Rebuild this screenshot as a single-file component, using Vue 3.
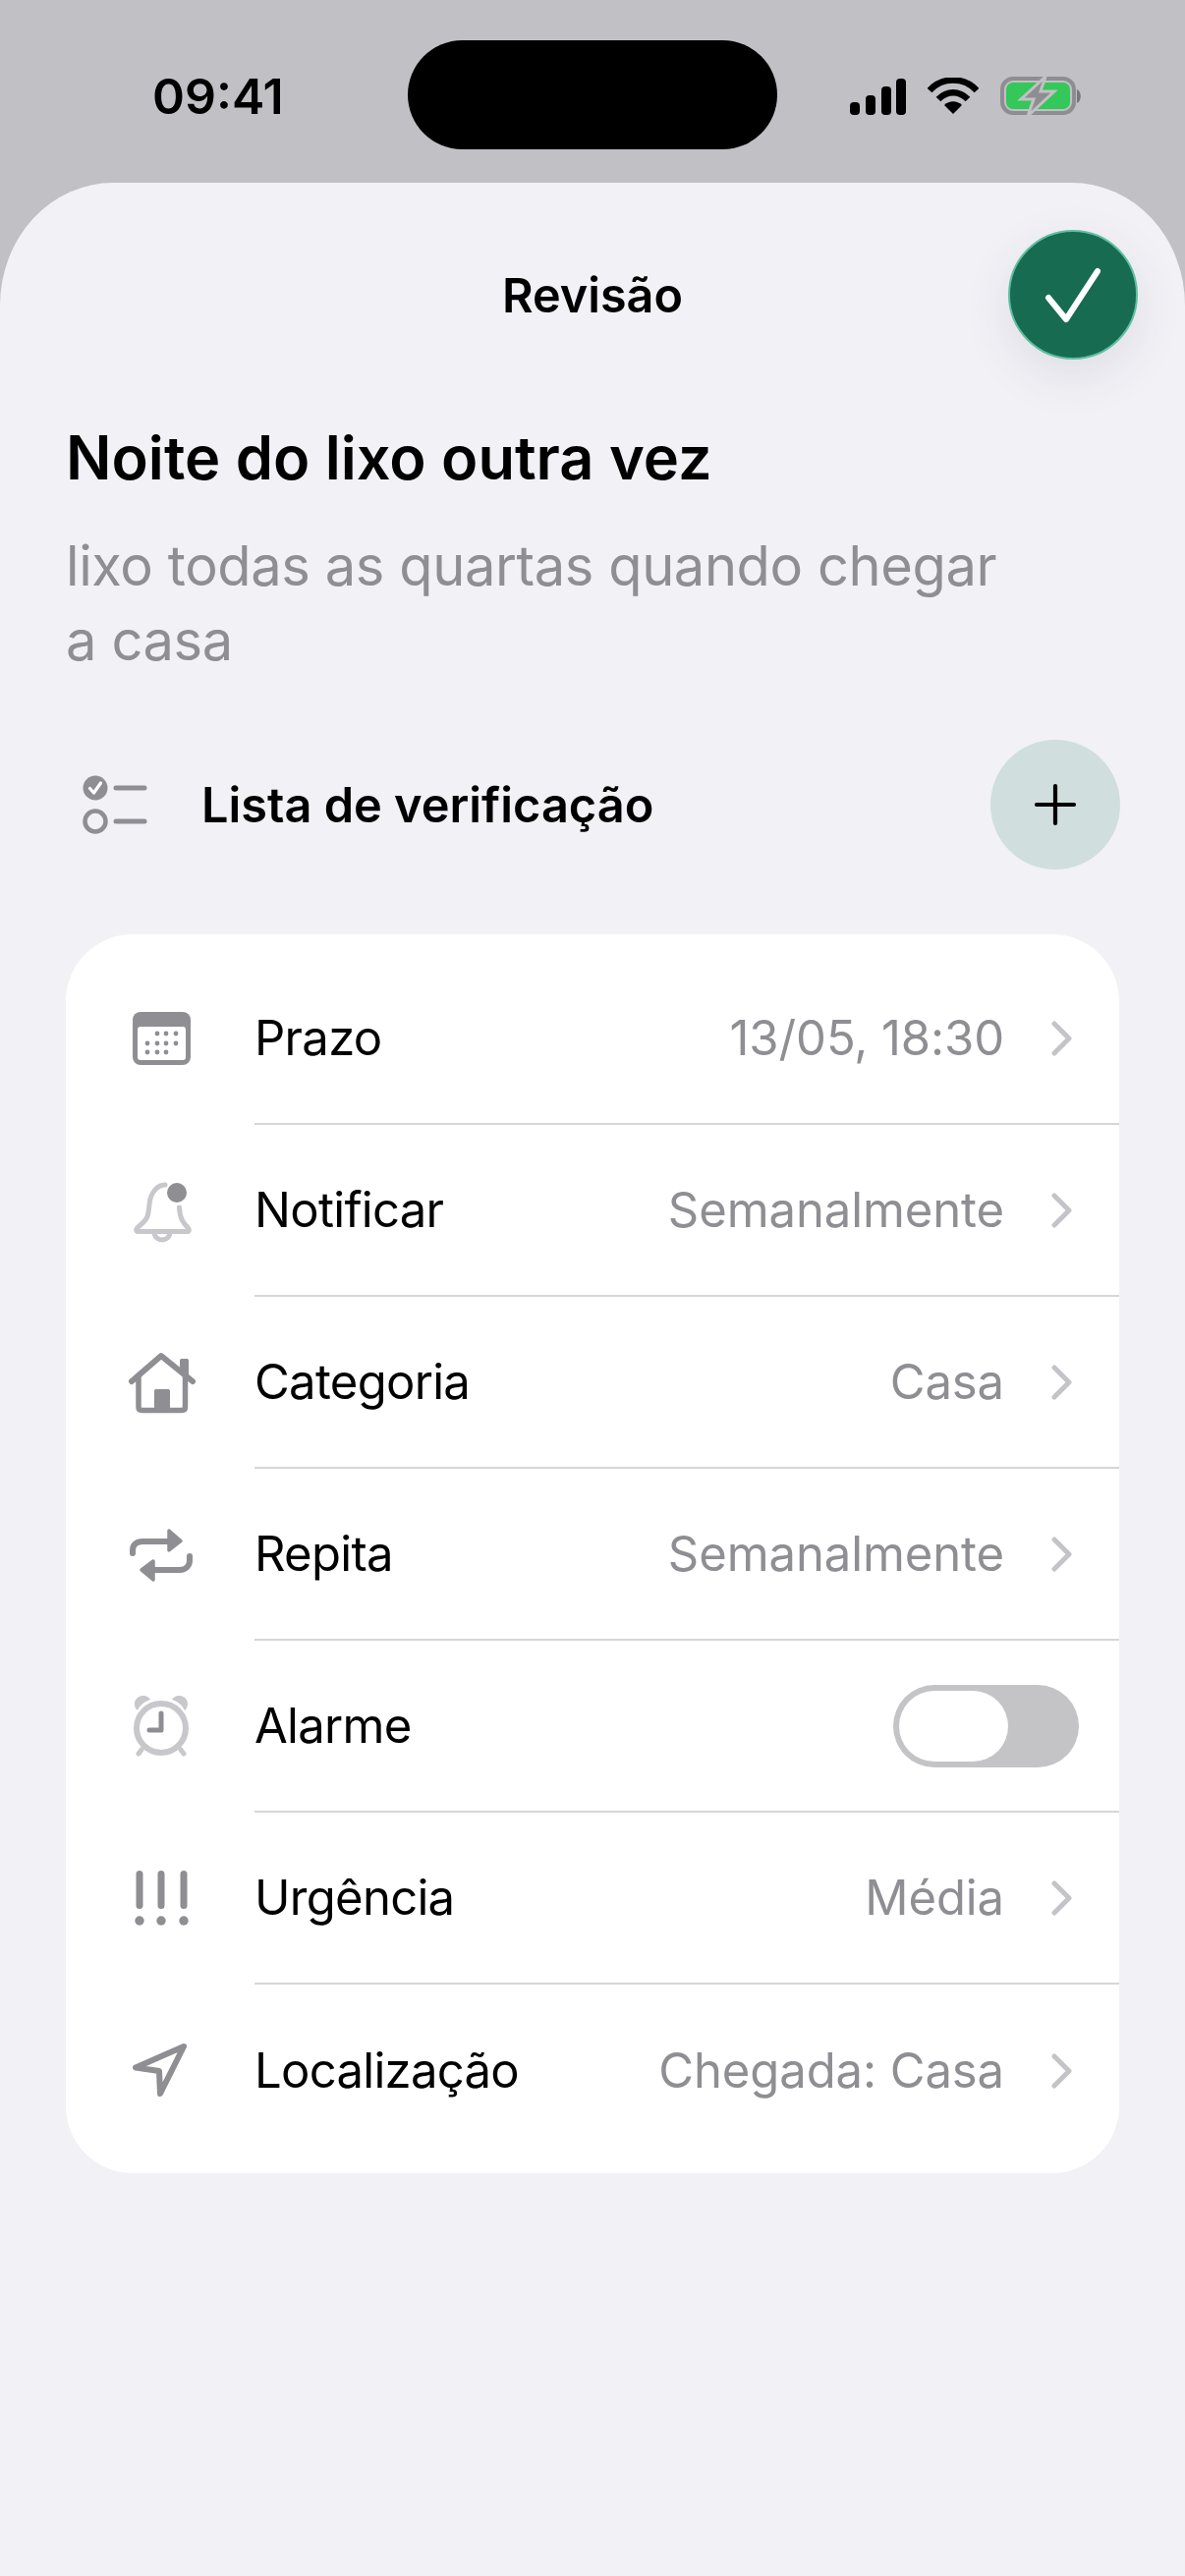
<template>
  <div class="page">
    <!-- status bar -->
    <div class="status">
      <span class="time">09:41</span>
      <div class="island"></div>
      <div class="status-icons">
        <svg width="60" height="38" viewBox="0 0 60 38">
          <rect x="2" y="25" width="10" height="13" rx="4" />
          <rect x="18" y="18" width="10" height="20" rx="4" />
          <rect x="34" y="9" width="10" height="29" rx="4" />
          <rect x="49" y="1" width="10" height="37" rx="4" />
        </svg>
        <svg width="52" height="38" viewBox="0 0 52 38">
          <path d="M2 13 C15 -1 37 -1 50 13" fill="none" stroke="#000" stroke-width="6.500" />
          <path d="M11 22 C20 13 32 13 41 22" fill="none" stroke="#000" stroke-width="6.500" />
          <path d="M17 28 C22 23 30 23 35 28 L26 37 Z" />
        </svg>
        <svg width="84" height="42" viewBox="0 0 84 42">
          <rect x="3" y="3" width="73" height="35" rx="11" fill="none" stroke="#8e8e92" stroke-width="4" />
          <rect x="7" y="7" width="65" height="27" rx="7" fill="#34c759" />
          <path d="M79 14 C84 16 84 26 79 28 Z" fill="#77777b" />
          <path d="M47 1 L22 24 H35 L29 41 L56 16 H42 Z" fill="#8e8e92" stroke="#c1c0c5" stroke-width="3" />
        </svg>
      </div>
    </div>

    <!-- sheet -->
    <div class="sheet">
      <div class="header">
        <span class="header-title">Revisão</span>
        <button class="done">
          <svg width="60" height="60" viewBox="0 0 60 60">
            <path d="M5 33 L23 55 L55 6" fill="none" stroke="#fff" stroke-width="6" stroke-linecap="round" stroke-linejoin="round" />
          </svg>
        </button>
      </div>

      <h1 class="title">Noite do lixo outra vez</h1>
      <p class="note">lixo todas as quartas quando chegar a casa</p>

      <div class="checklist">
        <div class="checklist-left">
          <svg width="68" height="60" viewBox="0 0 68 60">
            <circle cx="15" cy="13" r="12.500" fill="#8e8e93" />
            <path d="M9.500 13.500 L13.500 18 L20.500 8" fill="none" stroke="#fff" stroke-width="3.200" stroke-linecap="round" stroke-linejoin="round" />
            <circle cx="15" cy="47" r="10.500" fill="none" stroke="#8e8e93" stroke-width="4.500" />
            <path d="M36 13 H65 M36 47 H65" stroke="#8e8e93" stroke-width="5" stroke-linecap="round" />
          </svg>
          <span class="checklist-label">Lista de verificação</span>
        </div>
        <button class="add">
          <svg width="44" height="44" viewBox="0 0 44 44">
            <path d="M22 3 V41 M3 22 H41" stroke="#000" stroke-width="4.200" stroke-linecap="round" />
          </svg>
        </button>
      </div>

      <div class="card">
        <div v-for="row in rows" :key="row.label" class="row">
          <div class="row-icon">
            <svg width="80" height="80" viewBox="0 0 80 80">
              <g v-if="row.icon === 'calendar'">
                <rect x="11" y="12" width="59" height="54" rx="8" fill="#8e8e93" />
                <rect x="16" y="27" width="49" height="34" rx="3" fill="#fff" />
                <circle v-for="d in calendarDots" :key="d[0] + '-' + d[1]" :cx="d[0]" :cy="d[1]" r="2.400" fill="#8e8e93" />
              </g>
              <g v-else-if="row.icon === 'bell'">
                <path d="M44 13 C36 13 29 21 28 33 C27 44 26 48 21 52 L15.500 57 C14 59 14.500 60.500 17 60.500 H66 C68.500 60.500 69 59 67.500 57 C63 52 59 48 58.500 36" fill="none" stroke="#c7c7cc" stroke-width="5" stroke-linecap="round" />
                <path d="M33 61 C33 71.500 49 71.500 49 61" fill="none" stroke="#c7c7cc" stroke-width="5" />
                <circle cx="56" cy="21" r="10" fill="#8e8e93" />
              </g>
              <g v-else-if="row.icon === 'house'">
                <path d="M10 38 L40 12 L72 38" fill="none" stroke="#8e8e93" stroke-width="6" stroke-linecap="round" stroke-linejoin="round" />
                <path d="M59 17 C59 15.500 60 15 61 15 H66 C67 15 68 15.500 68 17 V32 L59 24 Z" fill="#8e8e93" />
                <path d="M17 31 V64 C17 66.500 18.500 67.500 20.500 67.500 H61 C63 67.500 64.500 66.500 64.500 64 V31" fill="none" stroke="#8e8e93" stroke-width="5.500" />
                <path d="M33 48 C33 46.500 34 46 35 46 H47 C48 46 49 46.500 49 48 V68 H33 Z" fill="#8e8e93" />
              </g>
              <g v-else-if="row.icon === 'repeat'">
                <path d="M11 38 V35 C11 29 15 26 21 26 H48" fill="none" stroke="#8e8e93" stroke-width="6" stroke-linecap="round" />
                <path d="M69 41 V45 C69 51 65 55 59 55 H32" fill="none" stroke="#8e8e93" stroke-width="6" stroke-linecap="round" />
                <path d="M48 15 L60 25.500 L48 35 Z" fill="#8e8e93" stroke="#8e8e93" stroke-width="3.500" stroke-linejoin="round" />
                <path d="M32 46 L20 55 L32 65 Z" fill="#8e8e93" stroke="#8e8e93" stroke-width="3.500" stroke-linejoin="round" />
              </g>
              <g v-else-if="row.icon === 'alarm'">
                <circle cx="40" cy="41" r="25" fill="none" stroke="#c7c7cc" stroke-width="6" />
                <path d="M15 22 C10 15 15 8 22 8 C25 8 28 10 29 12 C23 14 19 17 16.500 22 C16 23 15.500 23 15 22 Z" fill="#c7c7cc" />
                <path d="M65 22 C70 15 65 8 58 8 C55 8 52 10 51 12 C57 14 61 17 63.500 22 C64 23 64.500 23 65 22 Z" fill="#c7c7cc" />
                <path d="M20 63 L17 67 M60 63 L63 67" stroke="#c7c7cc" stroke-width="5" stroke-linecap="round" />
                <path d="M40 26 V43 H28" fill="none" stroke="#8e8e93" stroke-width="5" stroke-linecap="round" stroke-linejoin="round" />
              </g>
              <g v-else-if="row.icon === 'urgency'">
                <path d="M18 14.500 V46.500 M40 14.500 V46.500 M63 14.500 V46.500" stroke="#8e8e93" stroke-width="7" stroke-linecap="round" />
                <circle cx="18" cy="62" r="4.700" fill="#8e8e93" />
                <circle cx="40" cy="62" r="4.700" fill="#8e8e93" />
                <circle cx="63" cy="62" r="4.700" fill="#8e8e93" />
              </g>
              <g v-else>
                <path d="M63 15 L14 36.500 L38 40 L39 63 Z" fill="none" stroke="#8e8e93" stroke-width="6" stroke-linejoin="round" />
              </g>
            </svg>
          </div>
          <div class="row-body">
            <span class="row-label">{{ row.label }}</span>
            <div v-if="row.toggle" class="toggle"><span class="knob"></span></div>
            <div v-else class="row-value">
              <span>{{ row.value }}</span>
              <svg width="22" height="36" viewBox="0 0 22 36">
                <path d="M3 3 L18 18 L3 33" fill="none" stroke="#c4c4c8" stroke-width="5" stroke-linecap="round" stroke-linejoin="round" />
              </svg>
            </div>
          </div>
        </div>
      </div>
    </div>
  </div>
</template>

<script setup>
const rows = [
  { icon: "calendar", label: "Prazo", value: "13/05, 18:30" },
  { icon: "bell", label: "Notificar", value: "Semanalmente" },
  { icon: "house", label: "Categoria", value: "Casa" },
  { icon: "repeat", label: "Repita", value: "Semanalmente" },
  { icon: "alarm", label: "Alarme", toggle: true },
  { icon: "urgency", label: "Urgência", value: "Média" },
  { icon: "location", label: "Localização", value: "Chegada: Casa" },
];

const calendarCols = [26, 36, 45, 55];
const calendarDots = [
  [calendarCols[1], 34], [calendarCols[2], 34], [calendarCols[3], 34],
  [calendarCols[0], 44], [calendarCols[1], 44], [calendarCols[2], 44], [calendarCols[3], 44],
  [calendarCols[0], 53], [calendarCols[1], 53], [calendarCols[2], 53],
];
</script>

<style>
html, body {
  margin: 0;
  background: #f1f1f6;
}
</style>

<style scoped>
.page {
  width: 1206px;
  height: 2622px;
  display: flex;
  flex-direction: column;
  background: #c1c0c5;
  font-family: Inter, "Liberation Sans", sans-serif;
  color: #000;
  overflow: hidden;
}

.status {
  height: 186px;
  flex: none;
  display: flex;
  align-items: flex-start;
  box-sizing: border-box;
  padding: 41px 0 0 155px;
}
.time {
  width: 260px;
  margin-top: 27px;
  font-size: 50px;
  line-height: 60px;
  font-weight: 600;
}
.island {
  width: 376px;
  height: 111px;
  border-radius: 56px;
  background: #000;
}
.status-icons {
  display: flex;
  align-items: center;
  gap: 21px;
  margin: 36px 0 0 72px;
}

.sheet {
  flex: 1;
  box-sizing: border-box;
  padding: 0 67px;
  background: #f1f1f6;
  border-radius: 115px 115px 0 0 / 125px 125px 0 0;
}

.header {
  position: relative;
  height: 145px;
  display: flex;
  justify-content: center;
  align-items: flex-end;
}
.header-title {
  font-size: 48.5px;
  line-height: 60px;
  font-weight: 600;
}
.done {
  position: absolute;
  top: 48px;
  right: -19px;
  width: 132px;
  height: 132px;
  padding: 0;
  border: 2px solid #5fbf9f;
  border-radius: 50%;
  background: #176b50;
  display: flex;
  align-items: center;
  justify-content: center;
  box-shadow: 0 16px 50px rgba(60, 60, 70, 0.1);
}

.title {
  margin: 99px 0 0;
  font-size: 61.3px;
  line-height: 72px;
  font-weight: 600;
}
.note {
  width: 980px;
  margin: 36px 0 0;
  font-size: 56px;
  line-height: 76px;
  letter-spacing: -0.4px;
  color: #8e8e93;
}

.checklist {
  margin-top: 63px;
  margin-right: -1px;
  height: 132px;
  display: flex;
  align-items: center;
  justify-content: space-between;
  padding-left: 15px;
}
.checklist-left {
  display: flex;
  align-items: center;
  gap: 55px;
}
.checklist-label {
  font-size: 48.7px;
  font-weight: 600;
}
.add {
  width: 132px;
  height: 132px;
  padding: 0;
  border: 0;
  border-radius: 50%;
  background: #d0dedd;
  display: flex;
  align-items: center;
  justify-content: center;
}

.card {
  margin-top: 66px;
  background: #fff;
  border-radius: 68px;
  padding: 19px 0 17px;
}
.row {
  height: 175px;
  display: flex;
  align-items: center;
  box-sizing: border-box;
}
.row-icon {
  width: 192px;
  flex: none;
  padding-left: 57px;
  box-sizing: border-box;
  display: flex;
}
.row-body {
  flex: 1;
  height: 100%;
  display: flex;
  align-items: center;
  justify-content: space-between;
  padding-right: 47px;
  border-bottom: 2px solid #d6d6da;
  box-sizing: border-box;
}
.row:last-child .row-body {
  border-bottom: 0;
}
.row-label {
  font-size: 49px;
  letter-spacing: -0.7px;
}
.row-value {
  display: flex;
  align-items: center;
  gap: 48px;
  font-size: 49px;
  letter-spacing: -0.1px;
  color: #8e8e93;
}
.toggle {
  width: 189px;
  height: 84px;
  margin-right: -6px;
  box-sizing: border-box;
  padding: 6px;
  border-radius: 42px;
  background: #c4c4c7;
}
.knob {
  display: block;
  width: 111px;
  height: 72px;
  border-radius: 36px;
  background: #fff;
}
</style>
